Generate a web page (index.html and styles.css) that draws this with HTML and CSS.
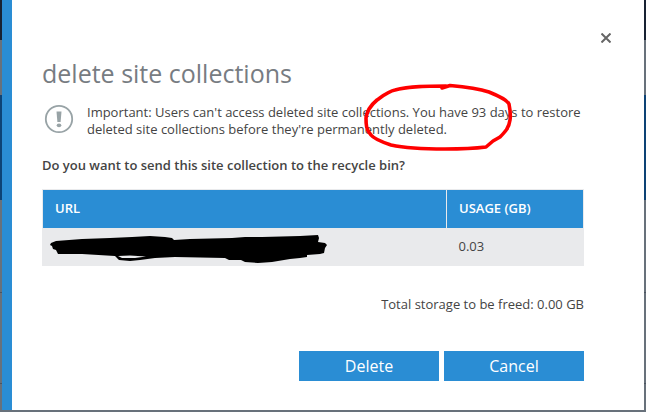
FILE: index.html
```html
<!DOCTYPE html>
<html lang="en">
<head>
    <meta charset="UTF-8">
    <meta name="viewport" content="width=device-width, initial-scale=1.0">
    <title>delete site collections</title>
    <link rel="stylesheet" href="styles.css">
</head>
<body>
    <div class="dialog" role="dialog" aria-labelledby="dialogTitle">
        <div class="dialog-top">
            <button type="button" class="close" aria-label="Close">
                <svg width="10" height="10" viewBox="0 0 10 10">
                    <path d="M0.5 0.5L9.5 9.5M9.5 0.5L0.5 9.5" stroke="#666" stroke-width="2"/>
                </svg>
            </button>
        </div>
        <div class="content">
            <h1 id="dialogTitle">delete site collections</h1>
            <div class="notice">
                <svg class="notice-icon" width="30" height="30" viewBox="0 0 30 30">
                    <circle cx="15" cy="15" r="13.2" fill="none" stroke="#98a3a6" stroke-width="1.8"/>
                    <path d="M12.5 7.5H17.5L16.6 18H13.4Z" fill="#98a3a6"/>
                    <ellipse cx="15" cy="21.3" rx="2.3" ry="1.9" fill="#98a3a6"/>
                </svg>
                <p>Important: Users can't access deleted site collections. You have 93 days to restore deleted site collections before they're permanently deleted.</p>
                <svg class="marker" width="150" height="70" viewBox="364 82 150 70">
                    <path d="M442 88L450 85.5C468 87 480 89 489 92C499 96 507 100 509 104C510 109 511 114 510 120C509 128 505 132 500 137L493 141L486 147C470 149 458 149 445 149C425 149 405 148 391 145C382 142 374 139 371 135C366 130 366 124 366 118C367 110 371 105 377 100C384 95 389 91 395 90C410 86 428 86 446 86" fill="none" stroke="#f00" stroke-width="3.6" stroke-linejoin="round" stroke-linecap="round"/>
                </svg>
            </div>
            <p class="question">Do you want to send this site collection to the recycle bin?</p>
            <table>
                <thead>
                    <tr>
                        <th scope="col">URL</th>
                        <th scope="col" class="usage">USAGE (GB)</th>
                    </tr>
                </thead>
                <tbody>
                    <tr>
                        <td class="url">
                            <svg width="280" height="36" viewBox="50 229 280 36">
                                <path fill-rule="evenodd" d="M50 246L51 244L56 242L82 240L110 239L132 238L150 237L165 238L172 239L174 241L190 240L232 239L245 238L262 238L300 237L318 236L319 239L318 243L325 244L327 246L325 249L324 254L320 255L307 256L307 258L300 259L290 260L272 263L258 264L245 263L241 261L229 261L225 259L175 258L155 259L140 261L130 262L119 261L116 258L115 257L82 255L58 255L56 251L53 250L52 247ZM118 257L122 259L135 259L146 257.5L130 256.5Z"/>
                            </svg>
                        </td>
                        <td>0.03</td>
                    </tr>
                </tbody>
            </table>
            <p class="total">Total storage to be freed: 0.00 GB</p>
            <div class="actions">
                <button type="button" class="btn">Delete</button>
                <button type="button" class="btn">Cancel</button>
            </div>
        </div>
    </div>
</body>
</html>
```

FILE: styles.css
```css
* {
    box-sizing: border-box;
}
body {
    font-family: 'Segoe UI', 'Open Sans', sans-serif;
    font-size: 13px;
    line-height: 17px;
    color: #444;
    margin: 0;
    padding: 0 2px 2px;
    min-height: 100vh;
    display: flex;
    background: linear-gradient(#182232 40px, #68717b 40px, #68717b 95px, #0d4375 95px, #0d4375 200px, #68717b 200px, #68717b 292px, #4b5560 292px, #4b5560 293px, #68717b 293px, #68717b 383px, #4b5560 383px, #4b5560 384px, #68717b 384px);
}
.dialog {
    flex: 1;
    background: #fff;
    border-left: 10px solid #2a8dd4;
    padding: 28px 28px 28px 30px;
}
.dialog-top {
    display: flex;
    justify-content: flex-end;
}
.close {
    width: 20px;
    height: 20px;
    padding: 5px;
    border: none;
    background: none;
    cursor: pointer;
}
.close svg {
    display: block;
}
.content {
    padding-right: 32px;
}
h1 {
    font-size: 25px;
    font-weight: normal;
    line-height: 34px;
    color: #777c82;
    margin: 8px 0 14px;
}
p {
    margin: 0;
}
.notice {
    position: relative;
    display: flex;
    gap: 13px;
    padding-left: 2px;
}
.notice-icon {
    flex: none;
}
.marker {
    position: absolute;
    left: 322px;
    top: -22px;
    pointer-events: none;
}
.question {
    font-weight: 600;
    margin: 19px 0 15px;
}
table {
    width: 100%;
    border-collapse: collapse;
    border: 1px solid #e9eaec;
    background: #e9eaec;
}
th,
td {
    height: 38px;
    padding: 0 12px;
    text-align: left;
}
th {
    background: #2a8dd4;
    color: #fff;
    font-weight: 600;
}
.usage {
    width: 137px;
    border-left: 1px solid #e9eaec;
}
.url {
    padding: 0 7px;
}
.url svg {
    display: block;
}
.total {
    text-align: right;
    margin: 30px 0 38px;
}
.actions {
    display: flex;
    justify-content: flex-end;
    gap: 5px;
}
.btn {
    width: 140px;
    height: 30px;
    padding: 0;
    border: none;
    background: #2a8dd4;
    color: #fff;
    font-family: inherit;
    font-size: 16px;
    cursor: pointer;
}
```
